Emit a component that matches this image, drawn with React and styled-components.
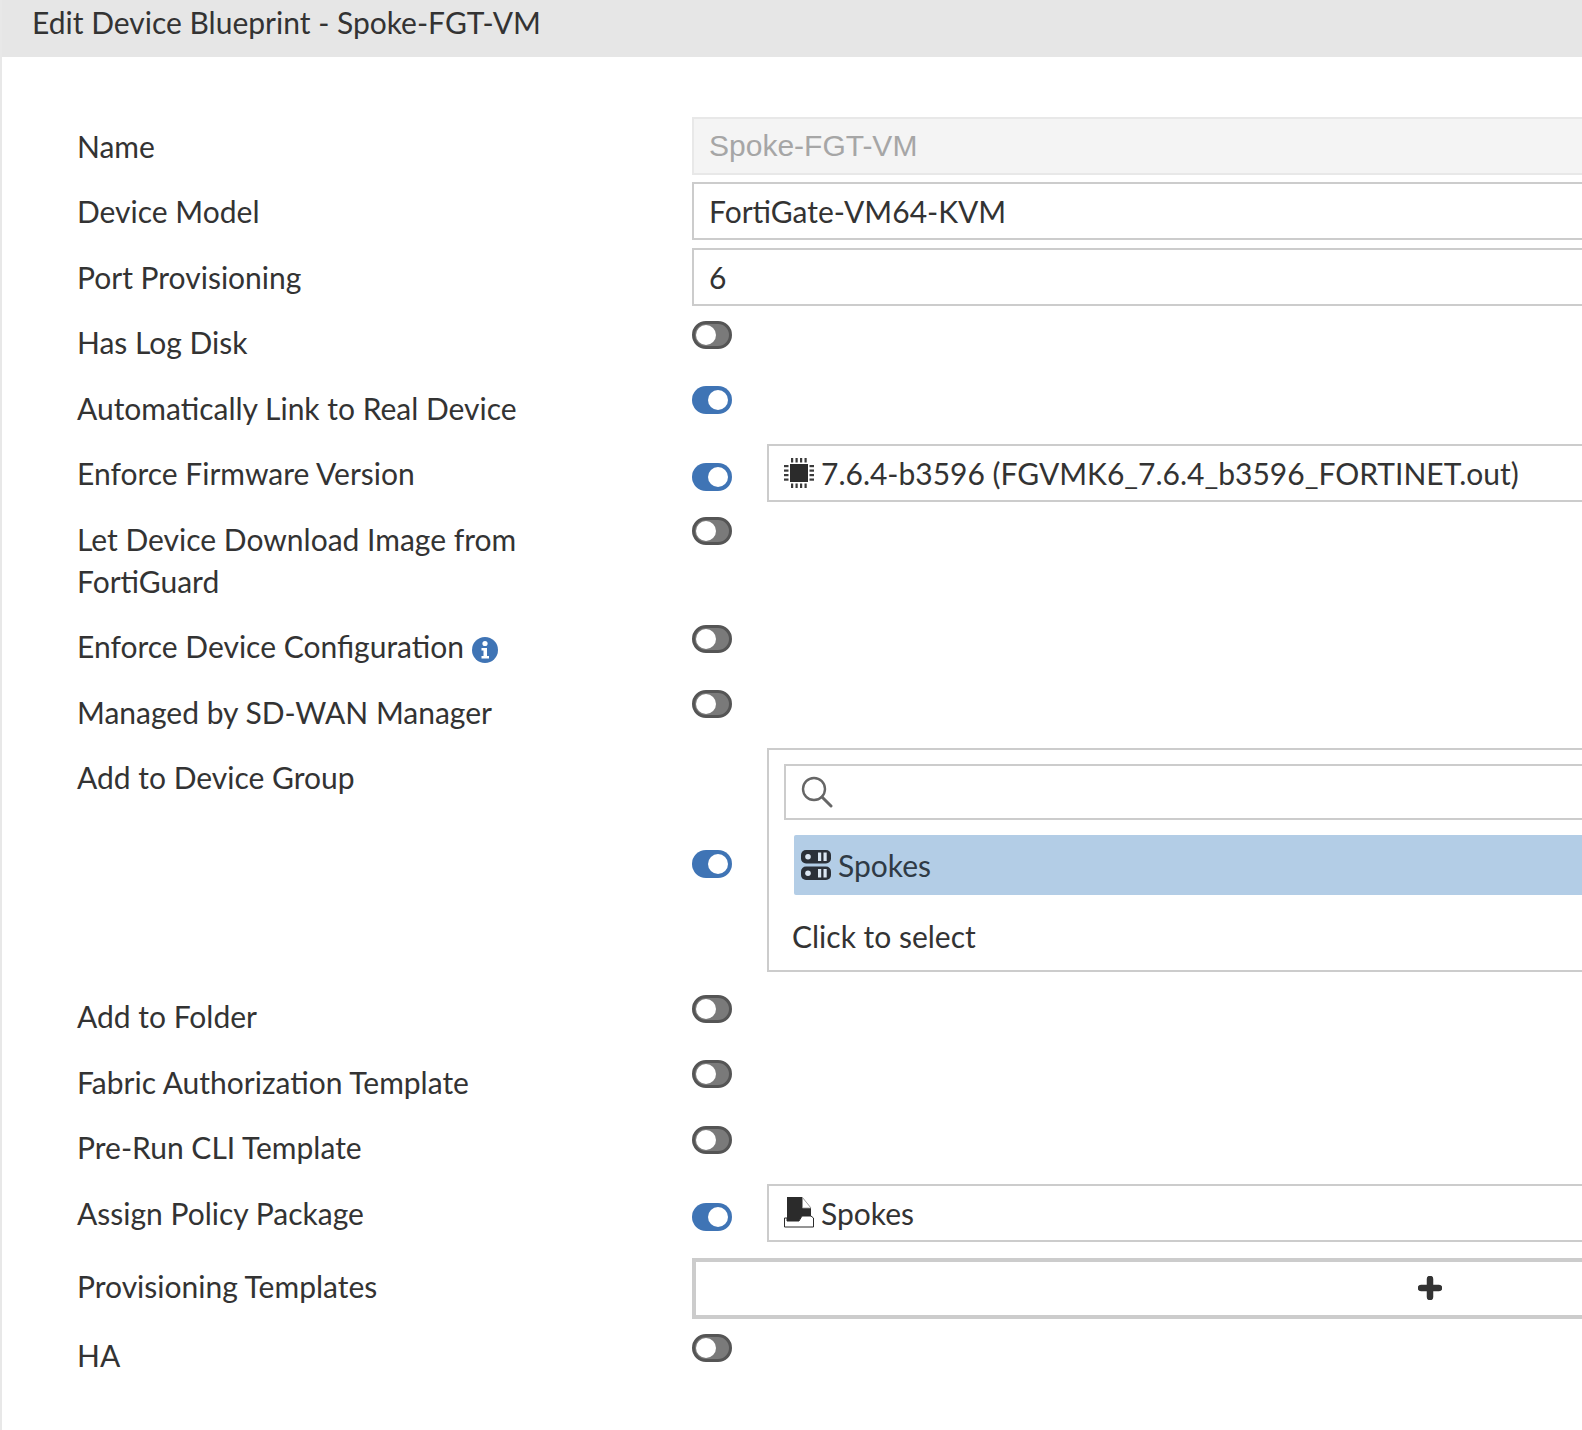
import styled, { createGlobalStyle } from 'styled-components';

const GlobalStyle = createGlobalStyle`
  html, body {
    margin: 0;
    padding: 0;
    background: #fff;
  }
  body {
    font-family: Lato, "Open Sans", sans-serif;
    color: #333;
  }
`;

const Page = styled.div`
  width: 1582px;
  height: 1430px;
  overflow: hidden;
  background: #fff;
  border-left: 2px solid #e8e8e8;
  box-sizing: border-box;
`;

const Header = styled.div`
  height: 57px;
  margin-left: -2px;
  padding-left: 32px;
  background: #e6e6e6;
  font-size: 30px;
  line-height: 44px;
  color: #333;
  white-space: nowrap;
`;

const Form = styled.div`
  display: flex;
  flex-direction: column;
  gap: 7.33px;
  padding: 60px 0 0 75px;
`;

const Row = styled.div`
  display: grid;
  grid-template-columns: 615px 1476px;
  height: ${props => props.$height || 58}px;
`;

const Label = styled.div`
  font-size: 30px;
  line-height: 42px;
  padding-top: ${props => props.$pad ?? 8.5}px;
  width: 470px;
  color: #333;
`;

const Control = styled.div`
  display: flex;
  align-items: flex-start;
`;

const Input = styled.div`
  flex: 1;
  box-sizing: border-box;
  height: 58px;
  margin-top: ${props => props.$top || 0}px;
  padding-left: 15px;
  border: 2px solid #ccc;
  display: flex;
  align-items: center;
  gap: 7px;
  font-size: 30px;
  color: #333;
`;

const DisabledInput = styled(Input)`
  background: #f4f4f4;
  border-color: #e8e8e8;
  color: #a6a6a6;
  font-family: "Liberation Sans", Arial, sans-serif;
  padding-bottom: 1px;
`;

const Toggle = styled.div`
  flex: none;
  box-sizing: border-box;
  width: 40px;
  height: 28px;
  margin-top: ${props => props.$top ?? 8}px;
  margin-right: 35px;
  border-radius: 14px;
  padding: 0 ${props => (props.$on ? 4 : 1)}px;
  display: flex;
  align-items: center;
  justify-content: ${props => (props.$on ? 'flex-end' : 'flex-start')};
  background: ${props => (props.$on ? '#3f74b5' : '#7a7a7a')};
  border: ${props => (props.$on ? 'none' : '3px solid #555')};
`;

const Knob = styled.span`
  width: 20px;
  height: 20px;
  border-radius: 50%;
  background: #fff;
`;

const GroupBox = styled.div`
  flex: 1;
  box-sizing: border-box;
  height: 224px;
  border: 2px solid #ccc;
  padding: 14px 0 0 15px;
`;

const SearchBox = styled.div`
  box-sizing: border-box;
  height: 56px;
  border: 2px solid #ccc;
  padding-left: 15px;
  display: flex;
  align-items: center;
`;

const SelectedItem = styled.div`
  height: 60px;
  margin: 15px 0 0 10px;
  padding-left: 7px;
  background: #b3cde6;
  border-radius: 2px;
  display: flex;
  align-items: center;
  gap: 7px;
  font-size: 30px;
  color: #2f3a45;
`;

const Placeholder = styled.div`
  margin: 19px 0 0 8px;
  font-size: 30px;
  line-height: 44px;
  color: #333;
`;

const AddBox = styled.div`
  flex: 1;
  box-sizing: border-box;
  height: 61px;
  margin-top: 1px;
  border: 4px solid #ccc;
  display: flex;
  align-items: center;
  justify-content: center;
`;

const InlineIcon = styled.svg`
  vertical-align: middle;
  flex: none;
`;

const InfoIcon = styled(InlineIcon)`
  margin-left: 8px;
  vertical-align: -5px;
`;

const ChipIcon = () => (
  <InlineIcon width="30" height="30" viewBox="0 0 30 30" fill="#3a3a3a">
    <rect x="6" y="6" width="18" height="18" fill="#2b2b2b" />
    {[7, 11.5, 16, 20.5].map(p => (
      <g key={p}>
        <rect x={p} y="0" width="2.2" height="4.5" />
        <rect x={p} y="25.5" width="2.2" height="4.5" />
        <rect x="0" y={p} width="4.5" height="2.2" />
        <rect x="25.5" y={p} width="4.5" height="2.2" />
      </g>
    ))}
  </InlineIcon>
);

const SearchIcon = () => (
  <InlineIcon width="32" height="32" viewBox="0 0 32 32" fill="none" stroke="#666" strokeWidth="2.4">
    <circle cx="13" cy="13" r="11" />
    <path d="M21 21 L30 30" strokeLinecap="round" strokeWidth="3" />
  </InlineIcon>
);

const GroupIcon = () => (
  <InlineIcon width="30" height="30" viewBox="0 0 30 30">
    <rect x="0" y="0" width="30" height="13.5" rx="5" fill="#2b3038" />
    <rect x="0" y="16.5" width="30" height="13.5" rx="5" fill="#2b3038" />
    <circle cx="7" cy="6.75" r="2.8" fill="#dbe6f2" />
    <circle cx="7" cy="23.25" r="2.8" fill="#dbe6f2" />
    <rect x="17" y="2.5" width="3.2" height="8.5" fill="#dbe6f2" />
    <rect x="22.5" y="2.5" width="3.2" height="8.5" fill="#dbe6f2" />
    <rect x="17" y="19" width="3.2" height="8.5" fill="#dbe6f2" />
    <rect x="22.5" y="19" width="3.2" height="8.5" fill="#dbe6f2" />
  </InlineIcon>
);

const PackageIcon = () => (
  <InlineIcon width="30" height="31" viewBox="0 0 30 31">
    <path d="M3 0 H18 L27 11 V19 H18 L15 24 H3 Z" fill="#2b2b2b" />
    <path d="M18.5 0.5 L27 11 H18.5 Z" fill="#fff" stroke="#999" strokeWidth="0.8" />
    <path d="M0.5 21 H3 V24 H15 L18 19 H27 L29.5 21 V30 H0.5 Z" fill="#fff" stroke="#2b2b2b" strokeWidth="1" />
  </InlineIcon>
);

const Info = () => (
  <InfoIcon width="26" height="26" viewBox="0 0 26 26">
    <circle cx="13" cy="13" r="13" fill="#3f74b5" />
    <circle cx="13" cy="6.5" r="2.6" fill="#fff" />
    <path d="M9.5 11 H15 V19 H17 V21.5 H9.5 V19 H11.5 V13.5 H9.5 Z" fill="#fff" />
  </InfoIcon>
);

const PlusIcon = () => (
  <InlineIcon width="24" height="24" viewBox="0 0 24 24">
    <path d="M12 3 V21 M3 12 H21" stroke="#333" strokeWidth="6.5" strokeLinecap="round" />
  </InlineIcon>
);

const Switch = ({ on, top }) => (
  <Toggle $on={on} $top={top}>
    <Knob />
  </Toggle>
);

const SwitchRow = ({ label, on, height, pad }) => (
  <Row $height={height}>
    <Label $pad={pad}>{label}</Label>
    <Control>
      <Switch on={on} />
    </Control>
  </Row>
);

export default function App() {
  return (
    <>
      <GlobalStyle />
      <Page>
        <Header>Edit Device Blueprint - Spoke-FGT-VM</Header>
        <Form>
          <Row>
            <Label $pad={7.5}>Name</Label>
            <Control>
              <DisabledInput>Spoke-FGT-VM</DisabledInput>
            </Control>
          </Row>
          <Row>
            <Label $pad={7.5}>Device Model</Label>
            <Control>
              <Input>FortiGate-VM64-KVM</Input>
            </Control>
          </Row>
          <Row>
            <Label>Port Provisioning</Label>
            <Control>
              <Input>6</Input>
            </Control>
          </Row>
          <SwitchRow label="Has Log Disk" />
          <SwitchRow label="Automatically Link to Real Device" on />
          <Row>
            <Label>Enforce Firmware Version</Label>
            <Control>
              <Switch on top={19} />
              <Input>
                <ChipIcon />
                7.6.4-b3596 (FGVMK6_7.6.4_b3596_FORTINET.out)
              </Input>
            </Control>
          </Row>
          <SwitchRow label="Let Device Download Image from FortiGuard" height={100.67} pad={9.5} />
          <Row>
            <Label>
              Enforce Device Configuration
              <Info />
            </Label>
            <Control>
              <Switch />
            </Control>
          </Row>
          <SwitchRow label="Managed by SD-WAN Manager" />
          <Row $height={232}>
            <Label>Add to Device Group</Label>
            <Control>
              <Switch on top={102} />
              <GroupBox>
                <SearchBox>
                  <SearchIcon />
                </SearchBox>
                <SelectedItem>
                  <GroupIcon />
                  Spokes
                </SelectedItem>
                <Placeholder>Click to select</Placeholder>
              </GroupBox>
            </Control>
          </Row>
          <SwitchRow label="Add to Folder" />
          <SwitchRow label="Fabric Authorization Template" />
          <SwitchRow label="Pre-Run CLI Template" />
          <Row $height={66.67}>
            <Label $pad={9.5}>Assign Policy Package</Label>
            <Control>
              <Switch on top={20} />
              <Input $top={1}>
                <PackageIcon />
                Spokes
              </Input>
            </Control>
          </Row>
          <Row $height={61.67}>
            <Label>Provisioning Templates</Label>
            <Control>
              <AddBox>
                <PlusIcon />
              </AddBox>
            </Control>
          </Row>
          <SwitchRow label="HA" />
        </Form>
      </Page>
    </>
  );
}
